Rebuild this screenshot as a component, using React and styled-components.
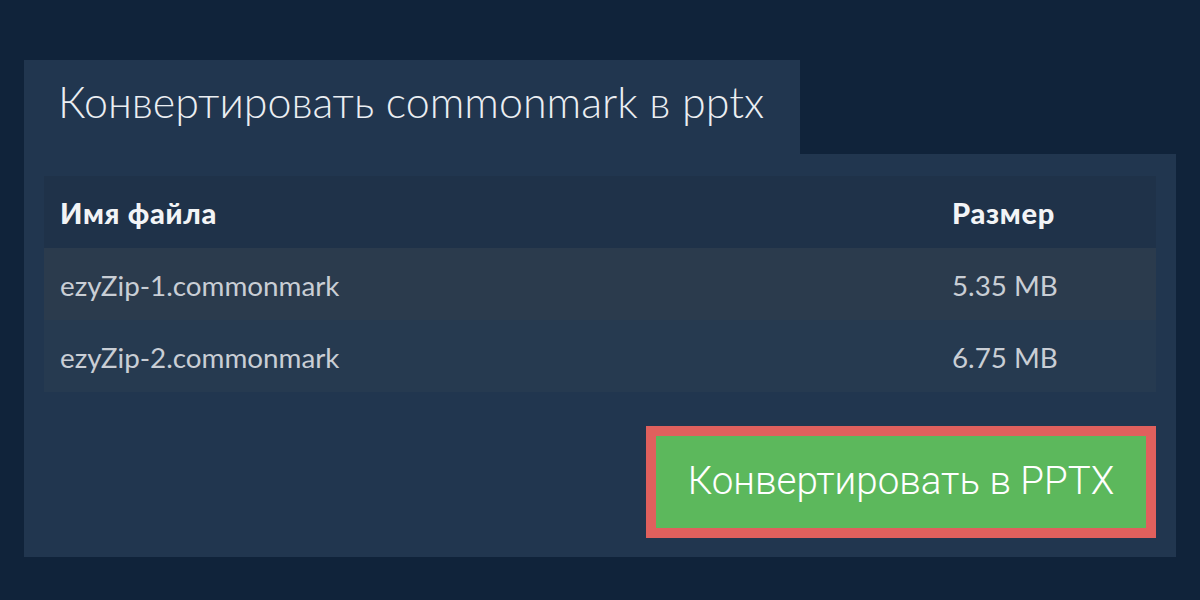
import React from "react";
import styled, { createGlobalStyle } from "styled-components";

const files = [
  { name: "ezyZip-1.commonmark", size: "5.35 MB" },
  { name: "ezyZip-2.commonmark", size: "6.75 MB" },
];

const App = () => {
  return (
    <Page>
      <GlobalStyle />
      <Tab>Конвертировать commonmark в pptx</Tab>
      <Panel>
        <Table>
          <HeaderRow>
            <NameCell>Имя файла</NameCell>
            <SizeCell>Размер</SizeCell>
          </HeaderRow>
          {files.map((file, i) => (
            <Row key={file.name} odd={i % 2 === 0}>
              <NameCell>{file.name}</NameCell>
              <SizeCell>{file.size}</SizeCell>
            </Row>
          ))}
        </Table>
        <Actions>
          <ConvertButton>Конвертировать в PPTX</ConvertButton>
        </Actions>
      </Panel>
    </Page>
  );
};

// styles
const GlobalStyle = createGlobalStyle`
  html, body {
    margin: 0;
    padding: 0;
    background: #10233a;
  }
`;
const Page = styled.div`
  width: 1200px;
  height: 600px;
  box-sizing: border-box;
  padding: 60px 24px 0;
  background: #10233a;
  font-family: "Lato", "Noto Sans", sans-serif;
  display: flex;
  flex-direction: column;
  align-items: flex-start;
`;
const Tab = styled.div`
  width: 776px;
  height: 94px;
  box-sizing: border-box;
  padding: 16px 0 0 34px;
  background: #21364f;
  color: #ebeef2;
  font-size: 43px;
  font-weight: 300;
  line-height: 52px;
`;
const Panel = styled.div`
  width: 1152px;
  box-sizing: border-box;
  padding: 22px 20px 19px;
  background: #21364f;
  display: flex;
  flex-direction: column;
  gap: 34px;
`;
const Table = styled.div`
  display: flex;
  flex-direction: column;
`;
const HeaderRow = styled.div`
  height: 72px;
  display: flex;
  align-items: center;
  background: #1f3249;
  color: #f2f4f6;
  font-size: 29px;
  font-weight: 900;
  letter-spacing: 0.7px;
`;
const Row = styled.div`
  height: 72px;
  display: flex;
  align-items: center;
  padding-top: 3px;
  box-sizing: border-box;
  background: ${(props) => (props.odd ? "#2b3b4d" : "#263a50")};
  color: #c9ced5;
  font-size: 27.8px;
`;
const NameCell = styled.div`
  flex: 1;
  padding-left: 16px;
`;
const SizeCell = styled.div`
  width: 204px;
`;
const Actions = styled.div`
  display: flex;
  justify-content: flex-end;
`;
const ConvertButton = styled.button`
  width: 510px;
  height: 112px;
  box-sizing: border-box;
  border: 10px solid #e0605d;
  background: #5cb85c;
  color: #ffffff;
  font-family: "Roboto", "Noto Sans", sans-serif;
  font-size: 38.5px;
  font-weight: 300;
  cursor: pointer;
  padding: 0 0 4px;
`;

export default App;
